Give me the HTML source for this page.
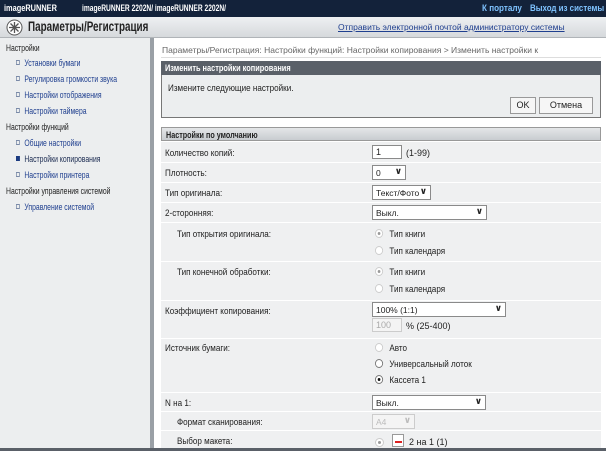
<!DOCTYPE html>
<html><head><meta charset="utf-8"><style>
*{margin:0;padding:0;box-sizing:border-box}
body{width:606px;height:451px;overflow:hidden;background:#fff;font-family:"Liberation Sans","DejaVu Sans",sans-serif;font-size:9px;color:#222;position:relative}
.a{position:absolute;white-space:nowrap}
.s{transform-origin:0 0}
.top{left:0;top:0;width:606px;height:17px;background:#13223a;color:#fff;font-weight:bold;font-size:9px}
.hdr{left:0;top:17px;width:606px;height:21px;background:linear-gradient(#eef0f2,#d6d9dc);border-bottom:1px solid #b0b4b8}
.side{left:0;top:38px;width:150px;height:410px;background:#eceeef}
.sep{left:150px;top:38px;width:4px;height:410px;background:#9aa0a6}
.lnk{color:#1f3f8f}
.sb{transform:scaleX(.76);transform-origin:0 0}
.sq{display:inline-block;width:5px;height:5px;border:1px solid #7a8aa8;margin-right:6px;vertical-align:1px}
.band{left:161px;width:440px;background:#eff0f1}
.lb{transform:scaleX(.9);transform-origin:0 0}
.inp{background:#fff;border:1px solid #8a8a8a;height:14px;padding:1px 3px;font-size:9px}
.sel{background:#fff;border:1px solid #8a8a8a;height:15px;padding:2px 3px;font-size:8.5px}
.sel b{position:absolute;right:3px;top:0px;font-size:9px}
.rad{display:inline-block;width:9px;height:9px;border:1px solid #777;border-radius:50%;background:#fff;vertical-align:-1px;margin-right:7px;position:relative}
.rad.on::after{content:"";position:absolute;left:2px;top:2px;width:3px;height:3px;border-radius:50%;background:#111}
.rad.dis{border-color:#ccc}
.rad.dis.on::after{background:#999}
</style></head><body>
<div class="a top"><span class="a s" style="left:4px;top:3px;transform:scaleX(.82)">imageRUNNER</span><span class="a s" style="left:82px;top:3px;transform:scaleX(.74)">imageRUNNER 2202N/ imageRUNNER 2202N/</span><span class="a s" style="left:482px;top:3px;color:#7fc3ff;transform:scaleX(.9)">К порталу</span><span class="a s" style="left:530px;top:3px;color:#7fc3ff;transform:scaleX(.88)">Выход из системы</span></div>
<div class="a hdr"><svg class="a" style="left:6px;top:2px" width="17" height="17" viewBox="0 0 17 17"><circle cx="8.5" cy="8.5" r="7.5" fill="#fff" stroke="#555"/><path d="M8.5 3v11M3 8.5h11M4.5 4.5l8 8M12.5 4.5l-8 8" stroke="#555" stroke-width="1.3"/></svg><span class="a s" style="left:28px;top:2px;font-size:13.5px;font-weight:bold;color:#222;transform:scaleX(.73)">Параметры/Регистрация</span><span class="a lnk" style="left:338px;top:5px;text-decoration:underline;font-size:8.5px">Отправить электронной почтой администратору системы</span></div>
<div class="a side"></div><div class="a sep"></div>
<span class="a sb" style="left:6px;top:43px">Настройки</span>
<span class="a lnk sb" style="left:16px;top:58px"><i class="sq"></i>Установки бумаги</span>
<span class="a lnk sb" style="left:16px;top:74px"><i class="sq"></i>Регулировка громкости звука</span>
<span class="a lnk sb" style="left:16px;top:90px"><i class="sq"></i>Настройки отображения</span>
<span class="a lnk sb" style="left:16px;top:106px"><i class="sq"></i>Настройки таймера</span>
<span class="a sb" style="left:6px;top:122px">Настройки функций</span>
<span class="a lnk sb" style="left:16px;top:138px"><i class="sq"></i>Общие настройки</span>
<span class="a sb" style="left:16px;top:154px;color:#1a2a50"><i class="sq" style="background:#1a3a80;border-color:#1a3a80"></i>Настройки копирования</span>
<span class="a lnk sb" style="left:16px;top:170px"><i class="sq"></i>Настройки принтера</span>
<span class="a sb" style="left:6px;top:186px">Настройки управления системой</span>
<span class="a lnk sb" style="left:16px;top:202px"><i class="sq"></i>Управление системой</span>

<span class="a" style="left:162px;top:45px;color:#666;font-size:8.5px">Параметры/Регистрация: Настройки функций: Настройки копирования &gt; Изменить настройки к</span>
<div class="a" style="left:161px;top:57px;width:440px;height:1px;background:#ddd"></div>
<div class="a" style="left:161px;top:61px;width:440px;height:57px;background:#eceeef;border:1px solid #777"></div>
<div class="a" style="left:161px;top:61px;width:440px;height:14px;background:#5a6068;color:#fff;font-weight:bold;padding:2px 4px"><span class="a s" style="left:4px;top:2px;transform:scaleX(.82)">Изменить настройки копирования</span></div>
<span class="a lb" style="left:168px;top:83px">Измените следующие настройки.</span>
<div class="a" style="left:510px;top:97px;width:26px;height:17px;background:#f6f6f6;border:1px solid #999;text-align:center;line-height:15px">OK</div>
<div class="a" style="left:539px;top:97px;width:54px;height:17px;background:#f6f6f6;border:1px solid #999;text-align:center;line-height:15px">Отмена</div>

<div class="a" style="left:161px;top:127px;width:440px;height:14px;background:linear-gradient(#e4e6e8,#c8ccd0);border:1px solid #999;font-weight:bold"><span class="a s" style="left:4px;top:2px;transform:scaleX(.8)">Настройки по умолчанию</span></div>
<div class="a band" style="top:142px;height:20px"></div>
<div class="a band" style="top:163px;height:19px"></div>
<div class="a band" style="top:183px;height:19px"></div>
<div class="a band" style="top:203px;height:19px"></div>
<div class="a band" style="top:223px;height:38px"></div>
<div class="a band" style="top:262px;height:38px"></div>
<div class="a band" style="top:301px;height:37px"></div>
<div class="a band" style="top:339px;height:53px"></div>
<div class="a band" style="top:393px;height:18px"></div>
<div class="a band" style="top:412px;height:18px"></div>
<div class="a band" style="top:431px;height:17px"></div>

<span class="a lb" style="left:165px;top:148px">Количество копий:</span>
<div class="a inp" style="left:372px;top:145px;width:30px">1</div><span class="a" style="left:406px;top:148px">(1-99)</span>
<span class="a lb" style="left:165px;top:168px">Плотность:</span>
<div class="a sel" style="left:372px;top:165px;width:34px">0<b>&#x2228;</b></div>
<span class="a lb" style="left:165px;top:188px">Тип оригинала:</span>
<div class="a sel" style="left:372px;top:185px;width:59px">Текст/Фото<b>&#x2228;</b></div>
<span class="a lb" style="left:165px;top:208px">2-сторонняя:</span>
<div class="a sel" style="left:372px;top:205px;width:115px">Выкл.<b>&#x2228;</b></div>
<span class="a lb" style="left:177px;top:229px">Тип открытия оригинала:</span>
<span class="a lb" style="left:375px;top:229px"><i class="rad on dis"></i>Тип книги</span>
<span class="a lb" style="left:375px;top:246px"><i class="rad dis"></i>Тип календаря</span>
<span class="a lb" style="left:177px;top:267px">Тип конечной обработки:</span>
<span class="a lb" style="left:375px;top:267px"><i class="rad on dis"></i>Тип книги</span>
<span class="a lb" style="left:375px;top:284px"><i class="rad dis"></i>Тип календаря</span>
<span class="a lb" style="left:165px;top:306px">Коэффициент копирования:</span>
<div class="a sel" style="left:372px;top:302px;width:134px">100% (1:1)<b>&#x2228;</b></div>
<div class="a inp" style="left:372px;top:318px;width:30px;border-color:#ccc;color:#aaa;background:#f4f4f4">100</div><span class="a" style="left:406px;top:321px">% (25-400)</span>
<span class="a lb" style="left:165px;top:343px">Источник бумаги:</span>
<span class="a lb" style="left:375px;top:343px"><i class="rad dis"></i>Авто</span>
<span class="a lb" style="left:375px;top:359px"><i class="rad"></i>Универсальный лоток</span>
<span class="a lb" style="left:375px;top:375px"><i class="rad on"></i>Кассета 1</span>
<span class="a lb" style="left:165px;top:398px">N на 1:</span>
<div class="a sel" style="left:372px;top:395px;width:114px">Выкл.<b>&#x2228;</b></div>
<span class="a lb" style="left:177px;top:417px">Формат сканирования:</span>
<div class="a sel" style="left:372px;top:414px;width:43px;border-color:#ccc;color:#bbb;background:#f4f4f4">A4<b>&#x2228;</b></div>
<span class="a lb" style="left:177px;top:436px">Выбор макета:</span>
<span class="a" style="left:375px;top:438px"><i class="rad on dis"></i></span>
<div class="a" style="left:392px;top:434px;width:12px;height:13px;border:1px solid #999;background:#fff"><div class="a" style="left:2px;top:6px;width:7px;height:2px;background:#d22"></div></div>
<span class="a" style="left:409px;top:437px">2 на 1 (1)</span>
<div class="a" style="left:0;top:448px;width:606px;height:3px;background:#5a6068"></div>
</body></html>
